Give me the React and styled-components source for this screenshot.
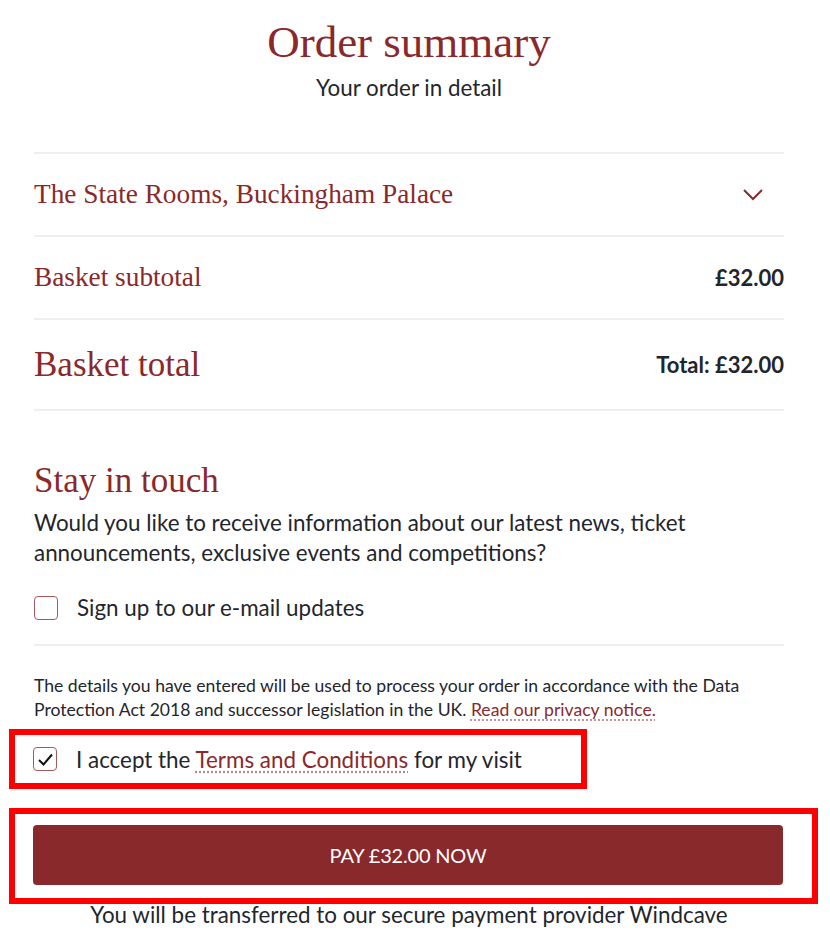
import styled, { createGlobalStyle } from 'styled-components';

const GlobalStyle = createGlobalStyle`
  html, body {
    margin: 0;
    padding: 0;
    background: #ffffff;
  }
  body {
    font-family: Lato, "Open Sans", sans-serif;
    color: #1f262d;
  }
`;

const RED = '#8a292b';

const Page = styled.main`
  width: 750px;
  padding: 16px 0 0 34px;
  display: flex;
  flex-direction: column;
`;

const Header = styled.header`
  display: flex;
  flex-direction: column;
  align-items: center;
  padding-bottom: 50px;
  border-bottom: 2px solid #efefef;
`;

const Title = styled.h1`
  margin: 0;
  font-family: "Liberation Serif", serif;
  font-weight: 400;
  font-size: 45px;
  line-height: 52px;
  color: ${RED};
`;

const Subtitle = styled.p`
  margin: 6px 0 0;
  font-size: 22.4px;
  line-height: 28px;
  color: #1f262d;
`;

const Row = styled.div`
  display: flex;
  align-items: center;
  justify-content: space-between;
  height: ${({ tall }) => (tall ? '89px' : '81px')};
  border-bottom: 2px solid #efefef;
`;

const RowLabel = styled.span`
  font-family: "Liberation Serif", serif;
  font-size: ${({ big }) => (big ? '35px' : '27.3px')};
  color: ${RED};
`;

const Amount = styled.span`
  font-size: 22px;
  font-weight: 700;
  color: #1f262d;
`;

const Chevron = styled.svg`
  width: 22px;
  height: 14px;
  margin-right: 20px;
`;

const Section = styled.section`
  display: flex;
  flex-direction: column;
  padding-top: 48px;
  padding-bottom: 23px;
  border-bottom: 2px solid #efefef;
`;

const SectionTitle = styled.h2`
  margin: 0;
  font-family: "Liberation Serif", serif;
  font-weight: 400;
  font-size: 35px;
  line-height: 44px;
  color: ${RED};
`;

const Lead = styled.p`
  margin: 5px 0 0;
  font-size: 22.4px;
  line-height: 30px;
`;

const CheckRow = styled.label`
  display: flex;
  align-items: center;
  gap: 19px;
  font-size: 22.4px;
  margin-top: ${({ top }) => top || '0'};
`;

const Box = styled.span`
  width: 22px;
  height: 22px;
  border: 1.5px solid #a65a5c;
  border-radius: 4px;
  display: flex;
  align-items: center;
  justify-content: center;
  flex-shrink: 0;
`;

const Notice = styled.p`
  margin: 28px 0 0;
  font-size: 17.6px;
  line-height: 24px;
`;

const Link = styled.a`
  color: ${RED};
  text-decoration: underline dotted;
  text-decoration-color: #b8878a;
  text-underline-offset: 4px;
`;

const Highlight = styled.div`
  display: flex;
  align-items: center;
  border: 6px solid #ff0000;
  margin-left: -25px;
  width: ${({ w }) => w};
  box-sizing: border-box;
  padding: ${({ pad }) => pad};
`;

const PayButton = styled.button`
  flex: 1;
  height: 60px;
  border: none;
  border-radius: 4px;
  background: ${RED};
  color: #ffffff;
  font-family: Lato, sans-serif;
  font-size: 20px;
  letter-spacing: -0.2px;
`;

const Footnote = styled.p`
  margin: -1px 0 0;
  text-align: center;
  font-size: 22.4px;
  line-height: 24px;
`;

export default function App() {
  return (
    <>
      <GlobalStyle />
      <Page>
        <Header>
          <Title>Order summary</Title>
          <Subtitle>Your order in detail</Subtitle>
        </Header>

        <Row>
          <RowLabel>The State Rooms, Buckingham Palace</RowLabel>
          <Chevron viewBox="0 0 22 14">
            <path d="M2 2 L11 11 L20 2" fill="none" stroke={RED} strokeWidth="2" />
          </Chevron>
        </Row>
        <Row>
          <RowLabel>Basket subtotal</RowLabel>
          <Amount>£32.00</Amount>
        </Row>
        <Row tall>
          <RowLabel big>Basket total</RowLabel>
          <Amount>Total: £32.00</Amount>
        </Row>

        <Section>
          <SectionTitle>Stay in touch</SectionTitle>
          <Lead>
            Would you like to receive information about our latest news, ticket
            <br />
            announcements, exclusive events and competitions?
          </Lead>
          <CheckRow top="26px">
            <Box />
            Sign up to our e-mail updates
          </CheckRow>
        </Section>

        <Notice>
          The details you have entered will be used to process your order in accordance with the Data
          <br />
          Protection Act 2018 and successor legislation in the UK. <Link href="#privacy">Read our privacy notice.</Link>
        </Notice>

        <Highlight w="578px" pad="0 0 0 18px" style={{ height: '60px', marginTop: '7px' }}>
          <CheckRow>
            <Box>
              <svg width="17" height="15" viewBox="0 0 17 15">
                <path d="M2 8 L6.5 12.5 L15 2.5" fill="none" stroke="#111" strokeWidth="2" />
              </svg>
            </Box>
            <span>
              I accept the <Link href="#terms">Terms and Conditions</Link> for my visit
            </span>
          </CheckRow>
        </Highlight>

        <Highlight w="809px" pad="11px 29px 13px 18px" style={{ marginTop: '19px' }}>
          <PayButton>PAY £32.00 NOW</PayButton>
        </Highlight>

        <Footnote>You will be transferred to our secure payment provider Windcave</Footnote>
      </Page>
    </>
  );
}
